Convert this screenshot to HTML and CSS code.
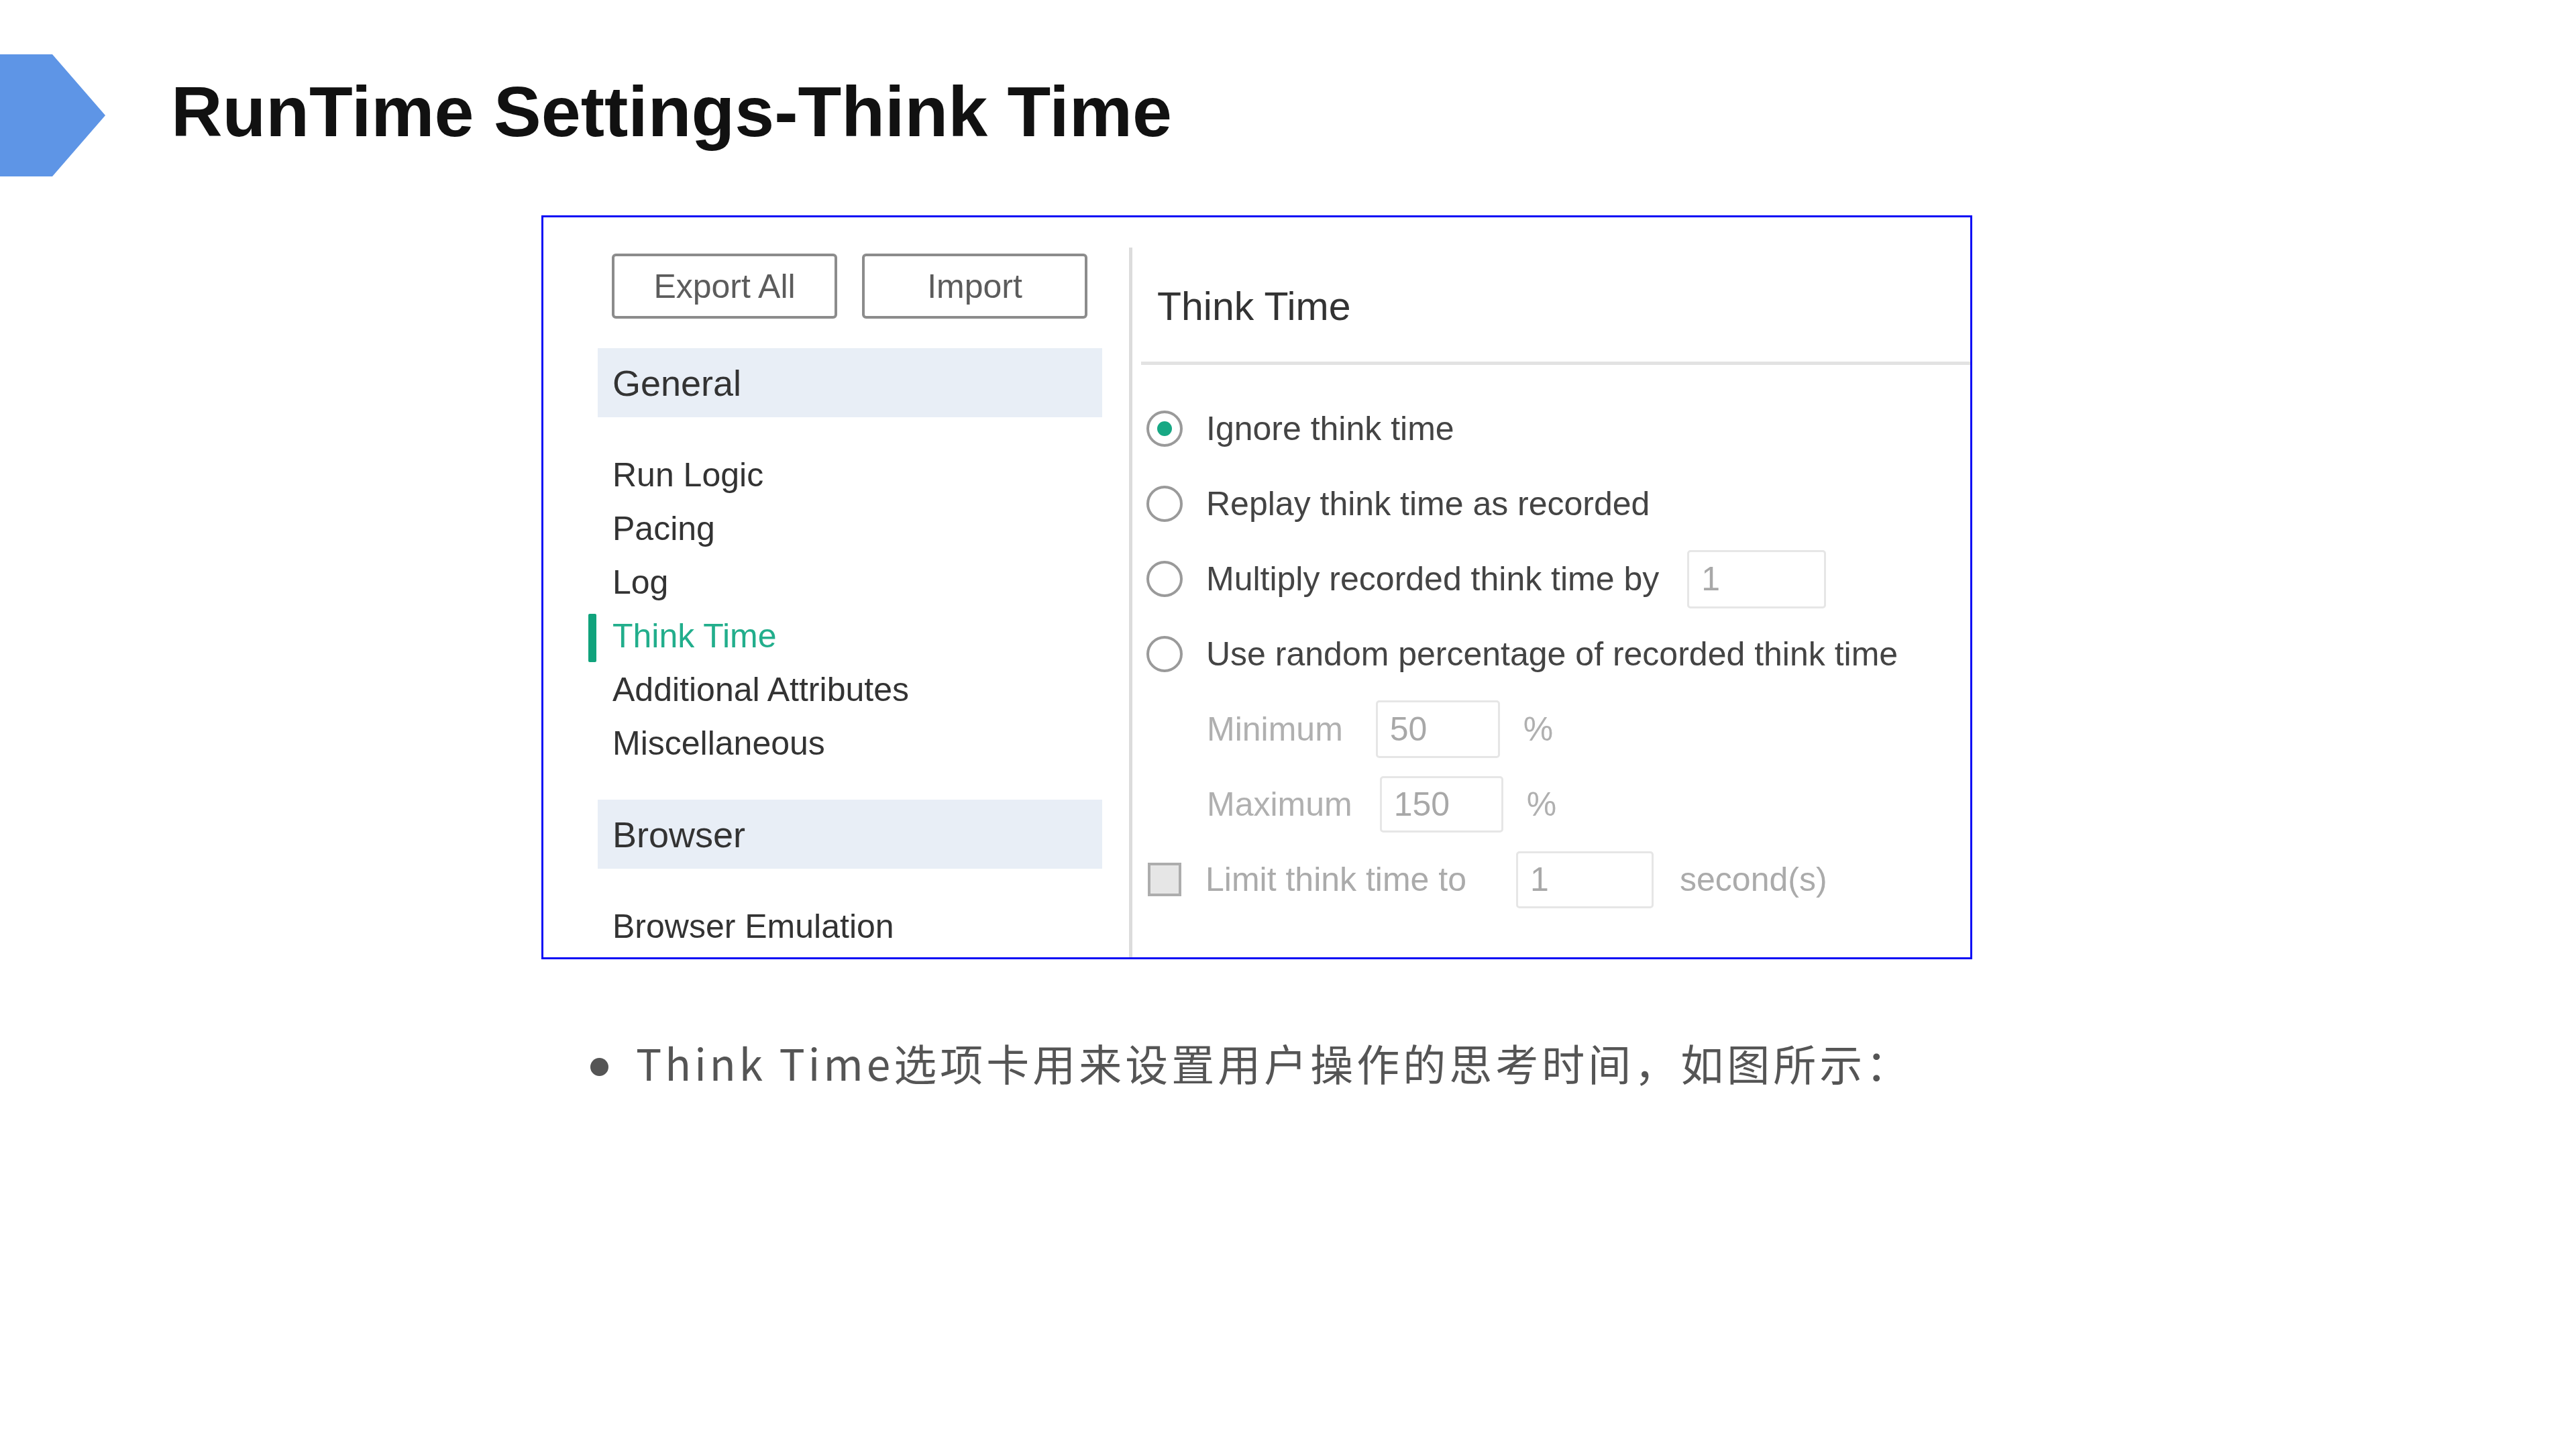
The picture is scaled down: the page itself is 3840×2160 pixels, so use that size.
FILE: index.html
```html
<!DOCTYPE html>
<html lang="zh-CN">
<head>
<meta charset="utf-8">
<title>RunTime Settings-Think Time</title>
<link rel="stylesheet" href="styles.css">
</head>
<body>
<header class="title-row">
  <svg class="chevron" width="157" height="182" viewBox="0 0 157 182"><polygon points="0,0 78,0 157,91 78,182 0,182" fill="#5e95e6"/></svg>
  <h1 class="title">RunTime Settings-Think Time</h1>
</header>

<section class="shot">
  <div class="nav">
    <div class="btns">
      <span class="btn">Export All</span>
      <span class="btn">Import</span>
    </div>
    <div class="group">General</div>
    <ul class="items">
      <li>Run Logic</li>
      <li>Pacing</li>
      <li>Log</li>
      <li class="active">Think Time</li>
      <li>Additional Attributes</li>
      <li>Miscellaneous</li>
    </ul>
    <div class="group">Browser</div>
    <ul class="items">
      <li>Browser Emulation</li>
    </ul>
  </div>
  <div class="pane">
    <h2 class="pane-title">Think Time</h2>
    <div class="opts">
      <div class="opt"><span class="radio on"></span>Ignore think time</div>
      <div class="opt"><span class="radio"></span>Replay think time as recorded</div>
      <div class="opt"><span class="radio"></span>Multiply recorded think time by<span class="field f-mult">1</span></div>
      <div class="opt"><span class="radio"></span>Use random percentage of recorded think time</div>
      <div class="opt sub"><span>Minimum</span><span class="field f-min">50</span><span class="unit">%</span></div>
      <div class="opt sub"><span>Maximum</span><span class="field f-max">150</span><span class="unit">%</span></div>
      <div class="opt dis"><span class="check"></span>Limit think time to<span class="field f-lim">1</span><span class="unit2">second(s)</span></div>
    </div>
  </div>
</section>

<ul class="notes">
  <li>Think Time选项卡用来设置用户操作的思考时间，如图所示：</li>
</ul>
</body>
</html>
```

FILE: styles.css
```css
html, body {
  margin: 0;
  padding: 0;
  background: #ffffff;
}

body {
  width: 3840px;
  height: 2160px;
  font-family: "Liberation Sans", Arial, sans-serif;
}

.title-row {
  display: flex;
  align-items: flex-start;
}

.chevron {
  display: block;
  margin-top: 81px;
  flex: none;
}

.title {
  margin: 113px 0 0 98px;
  font-family: "Liberation Sans", Arial, sans-serif;
  font-weight: bold;
  font-size: 106px;
  line-height: 1;
  color: #111111;
}

/* screenshot box */
.shot {
  margin: 58px 0 0 807px;
  width: 2133px;
  height: 1109px;
  box-sizing: border-box;
  border: 3px solid #0a0af5;
  display: flex;
  overflow: hidden;
}

.nav {
  width: 873px;
  flex: none;
  box-sizing: border-box;
  padding: 54px 40px 0 81px;
}

.btns {
  display: flex;
  gap: 37px;
  margin-left: 21px;
}

.btn {
  width: 336px;
  height: 97px;
  box-sizing: border-box;
  border: 4px solid #8c8c8c;
  border-radius: 6px;
  display: flex;
  align-items: center;
  justify-content: center;
  font-size: 50px;
  color: #5c5c5c;
}

.group {
  margin-top: 44px;
  height: 103px;
  background: #e8eef6;
  padding-left: 22px;
  display: flex;
  align-items: center;
  font-size: 54px;
  color: #333333;
}

.items {
  list-style: none;
  margin: 51px 0 40px 0;
  padding: 0;
}

.items li {
  position: relative;
  padding-left: 22px;
  font-size: 50px;
  line-height: 80px;
  color: #333333;
}

.items li.active {
  color: #22ae8c;
}

.items li.active::before {
  content: "";
  position: absolute;
  left: -14px;
  top: 7px;
  width: 12px;
  height: 72px;
  border-radius: 2px;
  background: #10a37c;
}

.group + .items {
  margin-top: 46px;
}

/* right pane */
.pane {
  flex: 1;
  margin-top: 45px;
  border-left: 5px solid #dcdcdc;
}

.pane-title {
  margin: 0 0 0 13px;
  padding: 56px 0 49px 24px;
  border-bottom: 5px solid #e2e2e2;
  font-weight: normal;
  font-size: 59px;
  line-height: 65px;
  color: #333333;
}

.opts {
  padding: 39px 0 0 21px;
}

.opt {
  height: 112px;
  display: flex;
  align-items: center;
  font-size: 50px;
  color: #444444;
  white-space: nowrap;
}

.radio {
  width: 54px;
  height: 54px;
  box-sizing: border-box;
  border: 4px solid #9a9a9a;
  border-radius: 50%;
  margin-right: 35px;
  display: flex;
  align-items: center;
  justify-content: center;
  flex: none;
}

.radio.on::after {
  content: "";
  width: 22px;
  height: 22px;
  border-radius: 50%;
  background: #17a884;
}

.field {
  box-sizing: border-box;
  height: 87px;
  border: 3px solid #e6e6e6;
  border-radius: 5px;
  padding-left: 18px;
  display: flex;
  align-items: center;
  color: #a8a8a8;
  flex: none;
}

.f-mult {
  width: 207px;
  margin-left: 42px;
}

.sub {
  padding-left: 90px;
  color: #b0b0b0;
}

.f-min {
  width: 185px;
  height: 86px;
  margin-left: 49px;
}

.f-max {
  width: 184px;
  height: 84px;
  margin-left: 41px;
}

.unit {
  margin-left: 35px;
}

.dis {
  color: #ababab;
}

.check {
  width: 50px;
  height: 50px;
  box-sizing: border-box;
  border: 4px solid #adadad;
  background: #e6e6e6;
  margin: 0 36px 0 2px;
  flex: none;
}

.f-lim {
  width: 205px;
  height: 85px;
  margin-left: 74px;
}

.unit2 {
  margin-left: 39px;
}

/* bullet note */
.notes {
  list-style: none;
  margin: 115px 0 0 880px;
  padding: 0;
}

.notes li {
  display: flex;
  align-items: center;
  font-family: "Noto Sans CJK SC", "Noto Sans", sans-serif;
  font-size: 64px;
  letter-spacing: 5px;
  line-height: 77px;
  color: #555555;
  white-space: nowrap;
}

.notes li::before {
  content: "";
  width: 27px;
  height: 27px;
  border-radius: 50%;
  background: #555555;
  margin: 13px 41px 0 0;
  flex: none;
}
```
